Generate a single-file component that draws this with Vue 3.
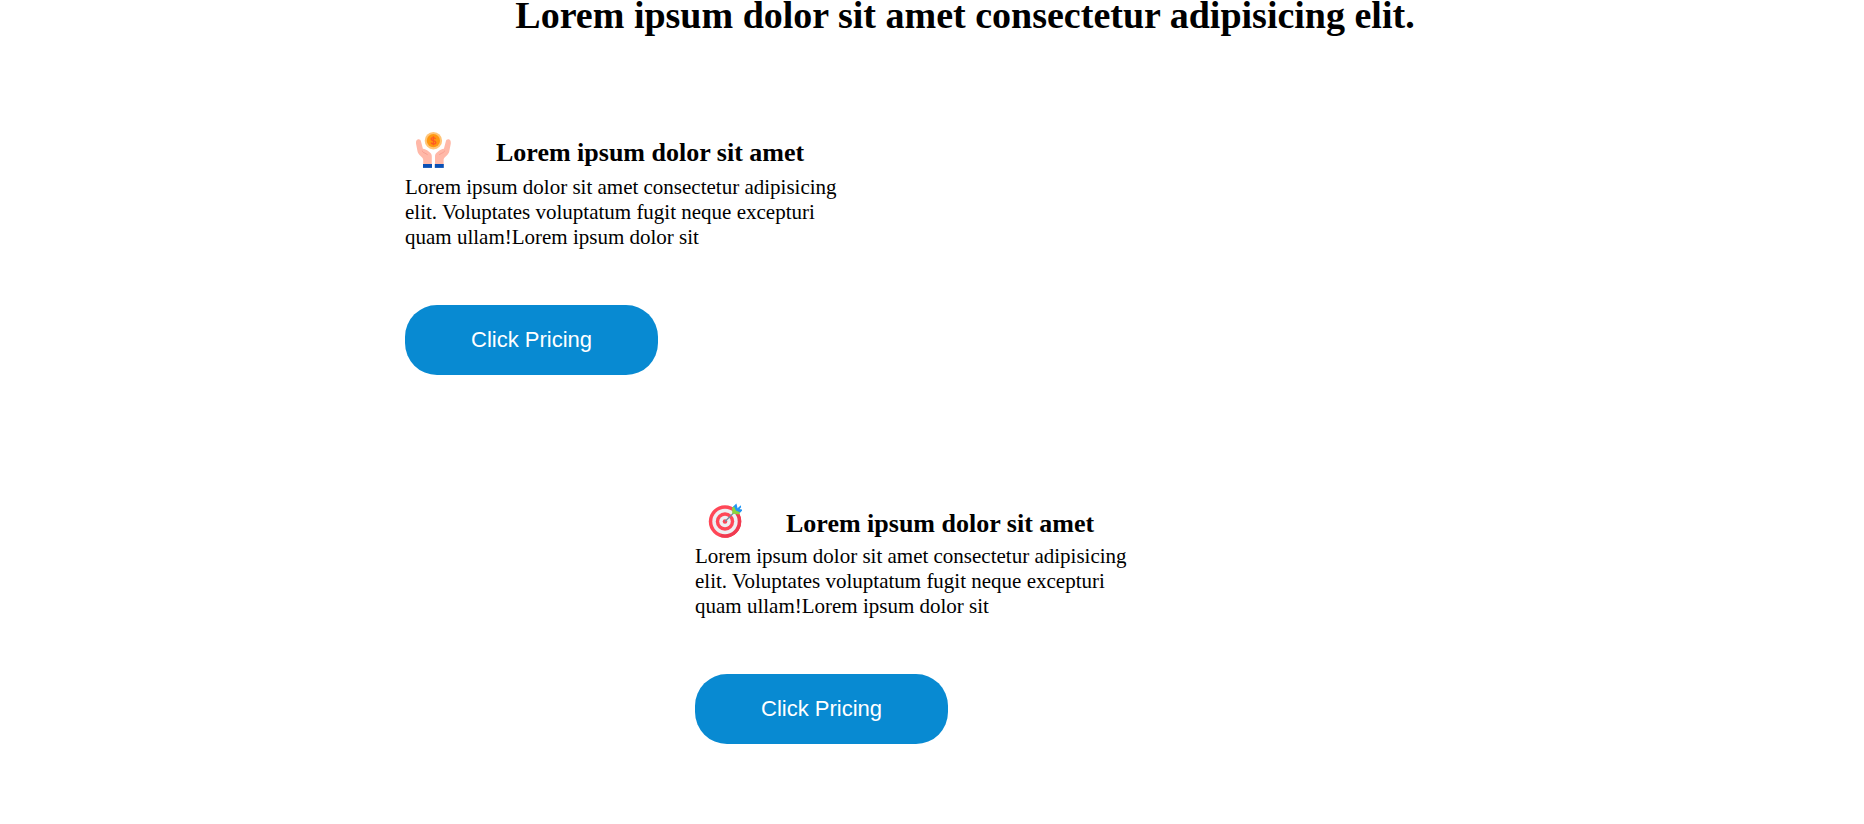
<script setup>
const text = 'Lorem ipsum dolor sit amet consectetur adipisicing elit. Voluptates voluptatum fugit neque excepturi quam ullam!Lorem ipsum dolor sit'
const cards = [
  { id: 'coin', title: 'Lorem ipsum dolor sit amet', text },
  { id: 'target', title: 'Lorem ipsum dolor sit amet', text },
]
</script>

<template>
  <main class="page">
    <div class="container">
      <h1 class="title">Lorem ipsum dolor sit amet consectetur adipisicing elit.</h1>
      <section v-for="card in cards" :key="card.id" class="card" :class="card.id">
        <div class="head">
          <svg v-if="card.id === 'coin'" class="icon" viewBox="0 0 36 36" aria-hidden="true">
            <g id="hand">
              <path fill="#ffb8a8" d="M0 11.500C-.2 9 .6 7.800 2 7.300c1.500-.4 2.700.5 3 2.200l1.900 7.200c2 .2 3.400 1 4.600 1.900l3 2.400c.9.900 1.300 2 1.300 3.800V32.500H7.200v-4.300c0-1.200-.4-2-1.100-2.700L3.300 22.700c-1-1.200-1.600-2.300-1.900-4z" />
              <path fill="none" stroke="#f79c8f" stroke-width=".9" stroke-linecap="round" d="M6.300 19c.3 1.200 1.400 1.700 2.600 2.100l2.400 1.400" />
              <path fill="#0a50b5" d="M7 32h9v3.900H7z" />
            </g>
            <use href="#hand" transform="translate(34.800 0) scale(-1 1)" />
            <circle cx="17.400" cy="8.700" r="8.700" fill="#ffc578" />
            <circle cx="17.400" cy="8.700" r="6.600" fill="#ff9811" />
            <path fill="none" stroke="#ff5a24" stroke-width="1.300" d="M19.600 6.800c-.5-.8-1.200-1.200-2.300-1.200-1.300 0-2.200.6-2.200 1.500 0 2.300 4.700.9 4.700 3.300 0 .9-.9 1.600-2.300 1.600-1.200 0-2-.5-2.500-1.400M17.400 4.300v8.900" />
          </svg>
          <svg v-else class="icon" viewBox="-1 1 36 36" aria-hidden="true">
            <circle cx="18" cy="19.500" r="16.200" fill="#ff4757" />
            <path fill="#f03a50" d="M29.500 8.100a16.200 16.200 0 0 1-17 26.700z" />
            <circle cx="18" cy="19.500" r="12.700" fill="#eef0f3" />
            <circle cx="18" cy="19.500" r="9.200" fill="#ff4757" />
            <circle cx="18" cy="19.500" r="5.800" fill="#eef0f3" />
            <circle cx="18" cy="19.500" r="2.300" fill="#ff4757" />
            <path fill="none" stroke="#6f8fa3" stroke-width="1.300" d="M18 19.500 28 9.500" />
            <path fill="#2196f3" d="m25.200 5.600 4.200-4.200 1.300 5.300 5.300 1.100-4.300 4.300-5.500-1z" />
            <path fill="#2196f3" d="m29.400 7.200 4.400-4 .3 2-2.500 3z" />
            <path fill="#8bd43c" d="m25.100 5.800 2-1.300 1.800 4 4.400 1.900-1.600 2.200-6.400-1z" />
          </svg>
          <h2 class="heading">{{ card.title }}</h2>
        </div>
        <p class="text">{{ card.text }}</p>
        <button class="button" type="button">Click Pricing</button>
      </section>
    </div>
  </main>
</template>

<style>
body {
  background: #fff;
}
</style>

<style scoped>
.page {
  padding-left: 66px;
  font-family: "Liberation Serif", "Times New Roman", serif;
  color: #000;
}
.container {
  max-width: 1120px;
  margin: 0 auto;
}
.title {
  margin: 0;
  font-size: 38px;
  line-height: 30px;
  text-align: center;
}
.card {
  max-width: 440px;
  margin-top: 102px;
}
.target {
  margin-top: 128px;
  margin-left: 290px;
}
.head {
  display: flex;
  align-items: flex-start;
  gap: 44px;
  padding-left: 11px;
}
.icon {
  width: 36px;
  height: 36px;
}
.heading {
  margin: 0;
  padding-top: 5px;
  font-size: 26px;
  line-height: 32px;
}
.text {
  margin: 6px 0 0;
  font-size: 21px;
  line-height: 25px;
}
.target .text {
  margin-top: 4px;
}
.button {
  margin-top: 55px;
  padding: 0 66px;
  height: 70px;
  border: 0;
  border-radius: 32px;
  background: #088ad2;
  color: #fff;
  font-family: "Liberation Sans", Arial, sans-serif;
  font-size: 22px;
}
</style>
